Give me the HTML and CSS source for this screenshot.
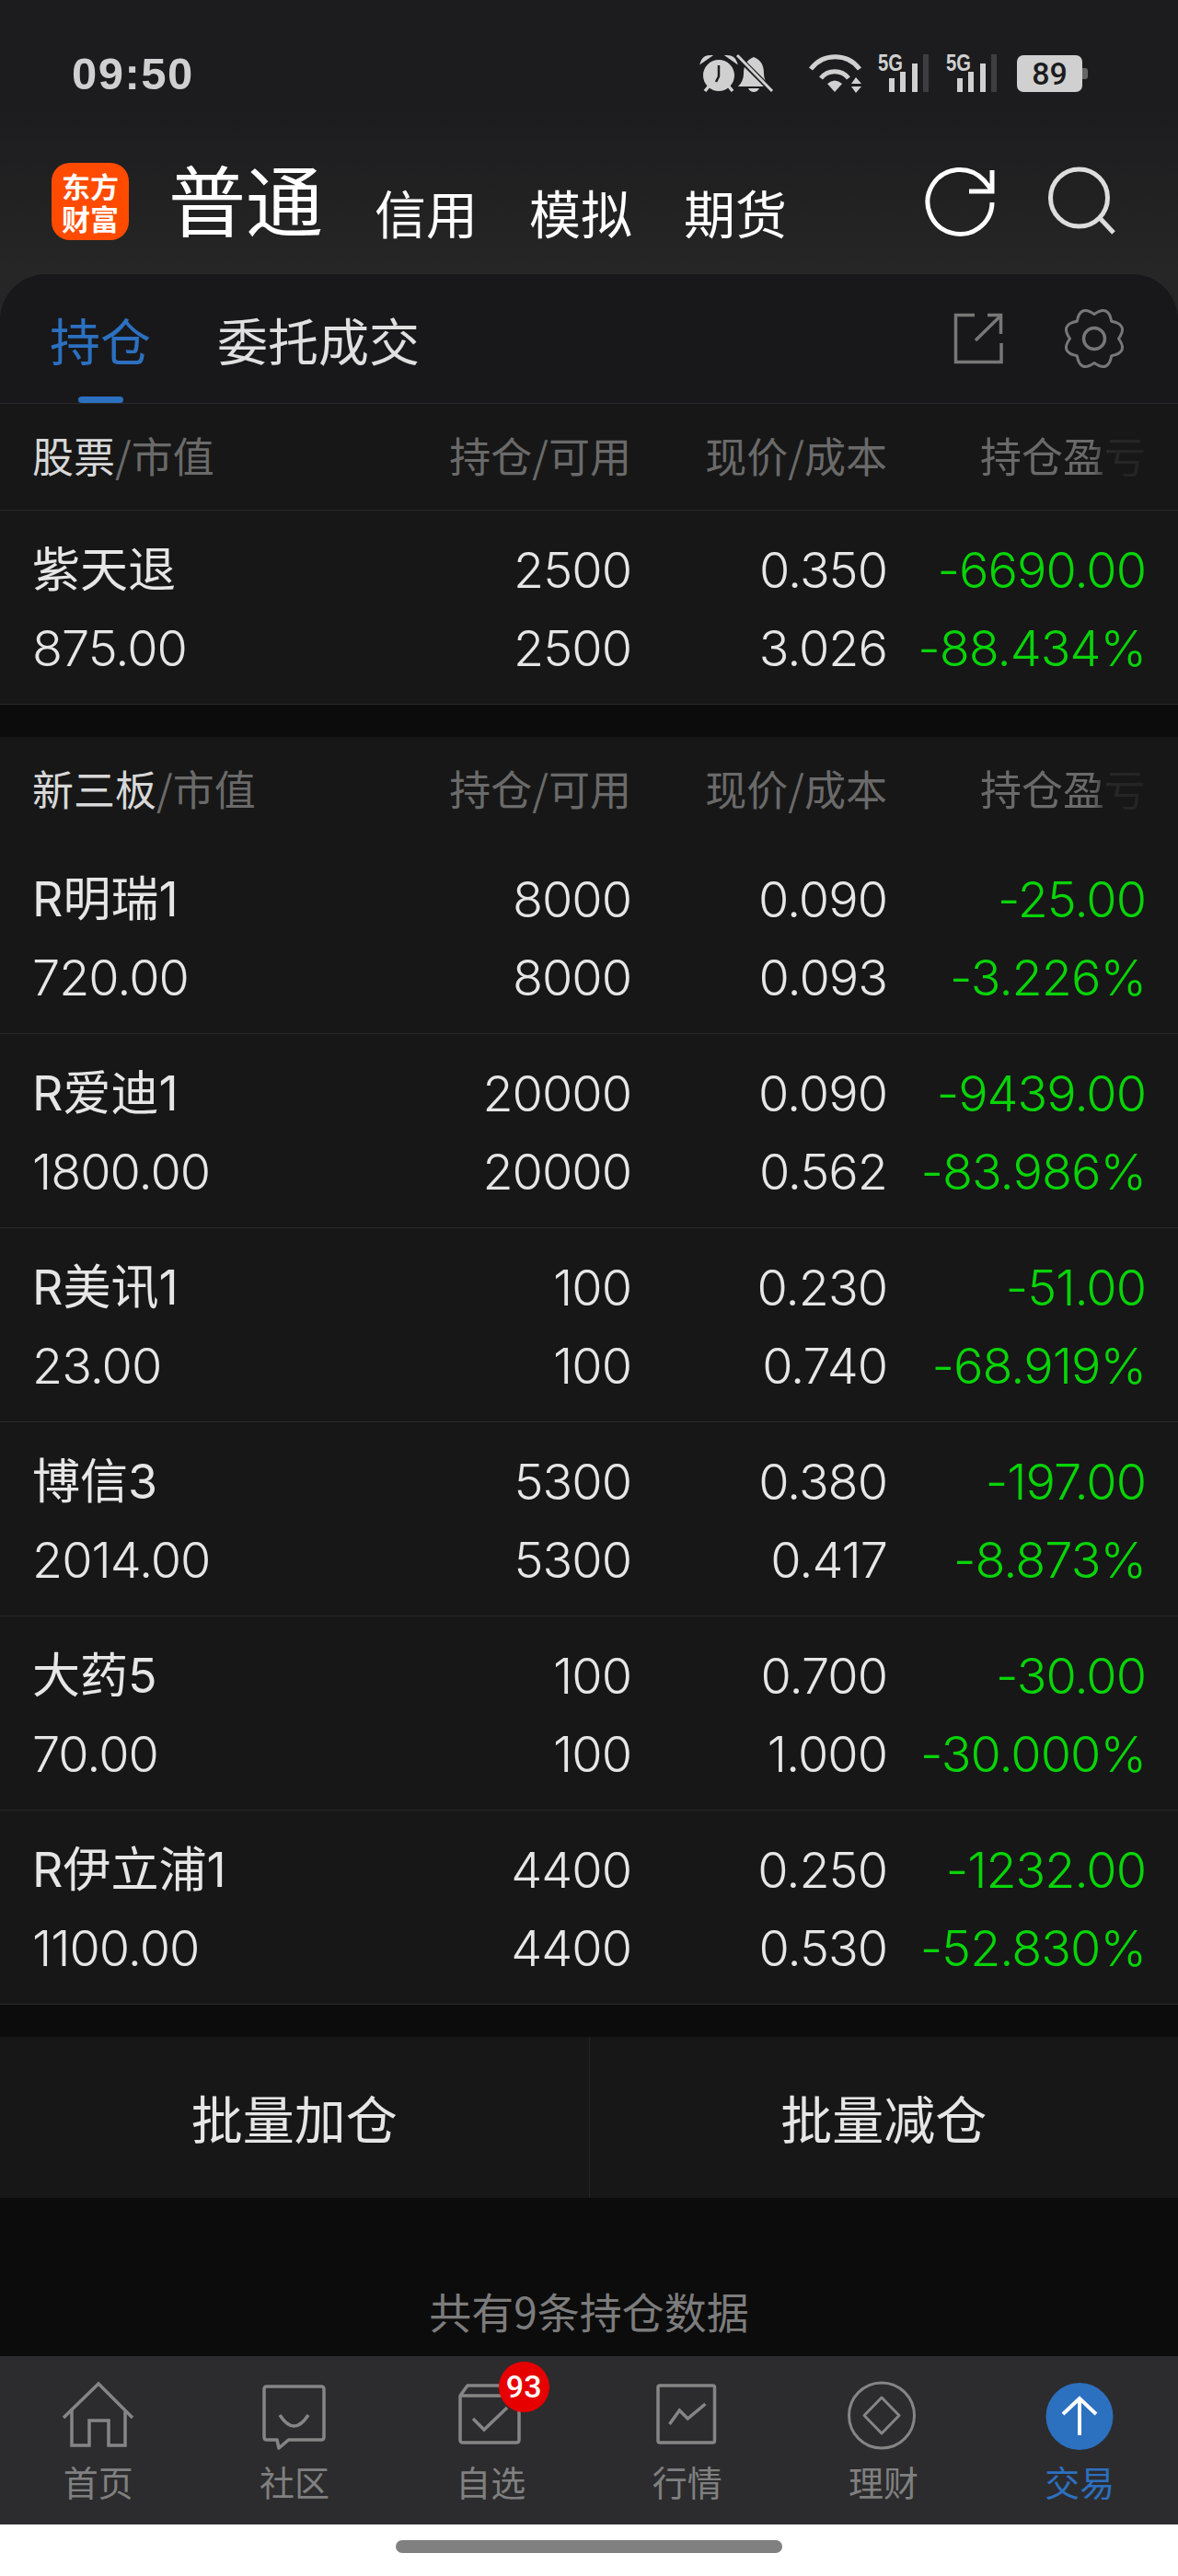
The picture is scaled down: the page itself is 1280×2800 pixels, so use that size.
FILE: index.html
```html
<!DOCTYPE html>
<html lang="zh-CN">
<head>
    <meta charset="utf-8" />
    <title>持仓</title>
    <link rel="stylesheet" href="styles.css">
</head>
<body>
<div class="top">
    <div class="status">
        <span class="time">09:50</span>
        <div class="status-icons">
            <svg class="ic-alarm" width="84" height="44" viewBox="0 0 84 44">
                <circle cx="23" cy="24" r="17" fill="#d0d0d0"/>
                <path d="M4 10 Q6 3 14 3 Z M32 3 Q40 3 42 10 Z" fill="#d0d0d0" stroke="#d0d0d0" stroke-width="2"/>
                <path d="M23 13V25L20 31" fill="none" stroke="#1c1c1e" stroke-width="2.500"/>
                <path d="M12 36 8 41M34 36 38 41" stroke="#d0d0d0" stroke-width="3.500"/>
                <path d="M61 4Q72 8 72 22Q72 30 78 36H44Q50 30 50 22Q50 8 61 4Z" fill="#d0d0d0"/>
                <path d="M55 38H67Q65 42 61 42Q57 42 55 38Z" fill="#d0d0d0"/>
                <path d="M41 1 81 41" stroke="#1c1c1e" stroke-width="6"/>
                <path d="M43 2 81 41" stroke="#d0d0d0" stroke-width="3"/>
            </svg>
            <svg class="ic-wifi" width="62" height="44" viewBox="0 0 62 44">
                <path d="M3 17A33 33 0 0 1 56 17M14 27A19 19 0 0 1 44 27" fill="none" stroke="#d0d0d0" stroke-width="5"/>
                <path d="M21 33Q29 26 37 33L29 42Z" fill="#d0d0d0"/>
                <path d="M47 33 52 26 58 33ZM47 36H58L52 43Z" fill="#d0d0d0"/>
            </svg>
            <svg class="ic-signal" width="60" height="60" viewBox="0 -16 60 60">
                <text x="1" y="19" class="five-g" textLength="27" lengthAdjust="spacingAndGlyphs">5G</text>
                <rect x="13" y="27" width="6" height="15" fill="#d0d0d0"/>
                <rect x="25" y="20" width="6" height="22" fill="#d0d0d0"/>
                <rect x="38" y="11" width="6" height="31" fill="#d0d0d0"/>
                <rect x="50" y="1" width="6" height="41" fill="#3e3e40"/>
            </svg>
            <svg class="ic-signal last" width="60" height="60" viewBox="0 -16 60 60">
                <text x="1" y="19" class="five-g" textLength="27" lengthAdjust="spacingAndGlyphs">5G</text>
                <rect x="13" y="27" width="6" height="15" fill="#d0d0d0"/>
                <rect x="25" y="20" width="6" height="22" fill="#d0d0d0"/>
                <rect x="38" y="11" width="6" height="31" fill="#d0d0d0"/>
                <rect x="50" y="1" width="6" height="41" fill="#3e3e40"/>
            </svg>
            <div class="battery"><span class="battery-num">89</span><i class="battery-nub"></i></div>
        </div>
    </div>

    <div class="nav">
        <div class="logo">东方<br>财富</div>
        <span class="nav-main">普通</span>
        <span class="nav-item">信用</span>
        <span class="nav-item">模拟</span>
        <span class="nav-item">期货</span>
        <svg class="ic-refresh" width="80" height="80" viewBox="0 0 80 80">
            <path d="M75 39A35 35 0 1 1 66 15L75 26M75 4V27H50" fill="none" stroke="#fff" stroke-width="5"/>
        </svg>
        <svg class="ic-search" width="76" height="76" viewBox="0 0 76 76">
            <circle cx="35.500" cy="35" r="31" fill="none" stroke="#ddd" stroke-width="5"/>
            <path d="M58 57 73 73" stroke="#ddd" stroke-width="5"/>
        </svg>
    </div>

    <div class="tabs">
        <span class="tab active">持仓</span>
        <span class="tab">委托成交</span>
        <svg class="ic-share" width="56" height="58" viewBox="0 0 56 58">
            <path d="M24 3.500H3.500V54.500H53V34M25 31 52 4.500M38 3.500H52.500V24" fill="none" stroke="#777" stroke-width="3.500"/>
        </svg>
        <svg class="ic-gear" width="68" height="66" viewBox="0 0 68 66">
            <path d="M60.500 33Q71.400 48.500 52.700 51.700Q49.500 70.400 34 59.500Q18.500 70.400 15.300 51.700Q-3.400 48.500 7.500 33Q-3.400 17.500 15.300 14.300Q18.500 -4.400 34 6.500Q49.500 -4.400 52.700 14.300Q71.400 17.500 60.500 33Z" fill="none" stroke="#777" stroke-width="3" stroke-linejoin="round"/>
            <circle cx="34" cy="33" r="11.500" fill="none" stroke="#777" stroke-width="3.500"/>
        </svg>
    </div>
</div>

<section class="block first-block">
    <div class="head">
        <div class="head-name"><b>股票</b>/市值</div>
        <div class="cell">持仓/可用</div>
        <div class="cell">现价/成本</div>
        <div class="cell"><span class="fade">持仓盈亏</span></div>
    </div>
    <div class="row">
        <div class="name">紫天退</div><div class="cell">2500</div><div class="cell">0.350</div><div class="cell green">-6690.00</div>
        <div>875.00</div><div class="cell">2500</div><div class="cell">3.026</div><div class="cell green">-88.434%</div>
    </div>
</section>

<section class="block">
    <div class="head second">
        <div class="head-name"><b>新三板</b>/市值</div>
        <div class="cell">持仓/可用</div>
        <div class="cell">现价/成本</div>
        <div class="cell"><span class="fade">持仓盈亏</span></div>
    </div>
    <div class="row">
        <div class="name">R明瑞1</div><div class="cell">8000</div><div class="cell">0.090</div><div class="cell green">-25.00</div>
        <div>720.00</div><div class="cell">8000</div><div class="cell">0.093</div><div class="cell green">-3.226%</div>
    </div>
    <div class="row">
        <div class="name">R爱迪1</div><div class="cell">20000</div><div class="cell">0.090</div><div class="cell green">-9439.00</div>
        <div>1800.00</div><div class="cell">20000</div><div class="cell">0.562</div><div class="cell green">-83.986%</div>
    </div>
    <div class="row">
        <div class="name">R美讯1</div><div class="cell">100</div><div class="cell">0.230</div><div class="cell green">-51.00</div>
        <div>23.00</div><div class="cell">100</div><div class="cell">0.740</div><div class="cell green">-68.919%</div>
    </div>
    <div class="row">
        <div class="name">博信3</div><div class="cell">5300</div><div class="cell">0.380</div><div class="cell green">-197.00</div>
        <div>2014.00</div><div class="cell">5300</div><div class="cell">0.417</div><div class="cell green">-8.873%</div>
    </div>
    <div class="row">
        <div class="name">大药5</div><div class="cell">100</div><div class="cell">0.700</div><div class="cell green">-30.00</div>
        <div>70.00</div><div class="cell">100</div><div class="cell">1.000</div><div class="cell green">-30.000%</div>
    </div>
    <div class="row">
        <div class="name">R伊立浦1</div><div class="cell">4400</div><div class="cell">0.250</div><div class="cell green">-1232.00</div>
        <div>1100.00</div><div class="cell">4400</div><div class="cell">0.530</div><div class="cell green">-52.830%</div>
    </div>
</section>

<div class="batch">
    <div class="batch-btn">批量加仓</div>
    <div class="batch-btn">批量减仓</div>
</div>

<div class="summary">共有9条持仓数据</div>

<footer class="tabbar">
    <div class="tabbar-item">
        <svg class="bar-icon" width="84" height="84" viewBox="0 0 84 84">
            <path d="M4 42 42 5 79 42M13 33V72H32V45H53V72H71V33" fill="none" stroke="#858585" stroke-width="3.500"/>
        </svg>
        首页
    </div>
    <div class="tabbar-item">
        <svg class="bar-icon" width="84" height="84" viewBox="0 0 84 84">
            <path d="M12 8H71Q74 8 74 11V63Q74 66 71 66H35.500L25 75 23 66H12Q9 66 9 63V11Q9 8 12 8Z" fill="none" stroke="#858585" stroke-width="3.500" stroke-linejoin="round"/>
            <path d="M26 39Q41.500 63 57 39" fill="none" stroke="#858585" stroke-width="3.500"/>
        </svg>
        社区
    </div>
    <div class="tabbar-item">
        <svg class="bar-icon" width="84" height="84" viewBox="0 0 84 84">
            <path d="M9 18V66Q9 69 12 69H70Q73 69 73 66V18ZM9 18 17 7H65L73 18" fill="none" stroke="#858585" stroke-width="3.500" stroke-linejoin="round"/>
            <path d="M23 43 35 55 60 31" fill="none" stroke="#858585" stroke-width="3.500"/>
        </svg>
        自选
        <span class="badge">93</span>
    </div>
    <div class="tabbar-item">
        <svg class="bar-icon" width="84" height="84" viewBox="0 0 84 84">
            <rect x="10" y="7" width="61.500" height="62" rx="2" fill="none" stroke="#858585" stroke-width="3.500"/>
            <path d="M22.500 49 33.300 34 42.300 43 61.400 27" fill="none" stroke="#858585" stroke-width="3.500"/>
        </svg>
        行情
    </div>
    <div class="tabbar-item">
        <svg class="bar-icon" width="84" height="84" viewBox="0 0 84 84">
            <circle cx="40" cy="39.500" r="35.500" fill="none" stroke="#858585" stroke-width="3"/>
            <path d="M40 20 59 39.500 40 59 21 39.500Z" fill="none" stroke="#858585" stroke-width="3" stroke-linejoin="round"/>
        </svg>
        理财
    </div>
    <div class="tabbar-item active">
        <svg class="bar-icon" width="84" height="84" viewBox="0 0 84 84">
            <circle cx="42" cy="40.500" r="36.500" fill="#2c70c0"/>
            <path d="M24 38 42 21 60 38M42 21V61" fill="none" stroke="#fff" stroke-width="4"/>
        </svg>
        交易
    </div>
</footer>

<div class="home-bar"><i class="home-pill"></i></div>
</body>
</html>
```

FILE: styles.css
```css
body {
    margin: 0;
    width: 1280px;
    height: 2800px;
    overflow: hidden;
    background-color: #0c0c0c;
    color: #e6e6e6;
    font-family: Inter, "Noto Sans CJK SC", sans-serif;
}

/* top area */
.top {
    background: linear-gradient(#1c1c1e 0, #1c1c1e 120px, #262626 298px);
}

.status {
    height: 160px;
    display: flex;
    align-items: center;
    padding: 0 104px 0 78px;
}

.time {
    font-family: "Liberation Sans", sans-serif;
    font-weight: bold;
    font-size: 49px;
    letter-spacing: 1.5px;
    color: #d0d0d0;
}

.status-icons {
    display: flex;
    align-items: center;
    margin-left: auto;
}

.ic-alarm {
    margin-right: 36px;
}

.ic-wifi {
    margin-right: 13px;
}

.ic-signal {
    margin-right: 14px;
    margin-top: -16px;
}

.ic-signal.last {
    margin-right: 18px;
}

.five-g {
    font-family: "Liberation Sans", sans-serif;
    font-weight: bold;
    font-size: 26px;
    fill: #d0d0d0;
}

.battery {
    position: relative;
    width: 71px;
    height: 40px;
    background-color: #d0d0d0;
    border-radius: 7px;
    text-align: center;
}

.battery-num {
    display: block;
    font-family: Roboto, sans-serif;
    font-size: 34px;
    line-height: 40px;
    font-weight: 500;
    color: #1c1c1e;
}

.battery-nub {
    position: absolute;
    left: 71px;
    top: 14px;
    width: 6px;
    height: 12px;
    border-radius: 0 3px 3px 0;
    background-color: #666;
}

.nav {
    height: 138px;
    display: flex;
    align-items: flex-start;
    padding-left: 56px;
    font-family: "Noto Sans CJK SC", sans-serif;
    color: #fff;
}

.logo {
    width: 84px;
    height: 84px;
    margin-top: 17px;
    border-radius: 20px;
    background-color: #ff4b00;
    font-size: 31px;
    font-weight: bold;
    line-height: 35px;
    text-align: center;
    padding-top: 7px;
    box-sizing: border-box;
}

.nav-main {
    margin-left: 43px;
    font-size: 84px;
    line-height: 110px;
}

.nav-item {
    font-size: 56px;
    line-height: 78px;
    margin-top: 31px;
    margin-left: 56px;
}

.ic-refresh {
    margin-left: 148px;
    margin-top: 21px;
}

.ic-search {
    margin-left: 54px;
    margin-top: 20px;
}

.tabs {
    height: 140px;
    display: flex;
    align-items: center;
    padding-left: 54px;
    box-sizing: border-box;
    background-color: #18181a;
    border-radius: 50px 50px 0 0;
}

.tab {
    position: relative;
    margin-right: 72px;
    font-family: "Noto Sans CJK SC", sans-serif;
    font-size: 55px;
    line-height: 140px;
    color: #e0e0e0;
}

.tab.active {
    color: #2c70c0;
}

.tab.active::after {
    content: "";
    position: absolute;
    left: 31px;
    bottom: 0;
    width: 49px;
    height: 7px;
    border-radius: 4px;
    background-color: #2c70c0;
}

.ic-share {
    margin-left: auto;
}

.ic-gear {
    margin-left: 64px;
    margin-right: 57px;
}

/* tables */
.block {
    background-color: #171717;
    margin-bottom: 35px;
}

.first-block {
    border-top: 1px solid #2a2a2a;
}

.head, .row {
    display: grid;
    grid-template-columns: 1fr 224px 278px 281px;
    padding: 0 35px 0 35px;
}

.head {
    height: 110px;
    padding-bottom: 5px;
    align-items: center;
    font-size: 45px;
    font-family: "Noto Sans CJK SC", sans-serif;
    color: #6a6a6a;
    border-bottom: 1px solid #2a2a2a;
}

.head.second {
    height: 110px;
    padding-bottom: 2px;
    border-bottom: none;
}

.head-name b {
    font-weight: normal;
    color: #d8d8d8;
}

.fade {
    -webkit-mask-image: linear-gradient(to right, #000 68%, rgba(0, 0, 0, 0.2) 78%, rgba(0, 0, 0, 0.15) 100%);
    mask-image: linear-gradient(to right, #000 68%, rgba(0, 0, 0, 0.2) 78%, rgba(0, 0, 0, 0.15) 100%);
}

.row {
    padding-top: 22px;
    padding-bottom: 18px;
    font-size: 54px;
    font-weight: 300;
    letter-spacing: -1px;
    line-height: 85px;
    border-bottom: 1px solid #2a2a2a;
}

.name {
    font-size: 52px;
    font-weight: 400;
    letter-spacing: 0;
}

.cell {
    text-align: right;
}

.green {
    color: #08d408;
}

.batch {
    display: flex;
    height: 175px;
    background-color: #171717;
}

.batch-btn {
    flex: 1;
    text-align: center;
    font-family: "Noto Sans CJK SC", sans-serif;
    font-size: 56px;
    line-height: 173px;
}

.batch-btn:first-child {
    border-right: 1px solid #232323;
}

.summary {
    height: 172px;
    box-sizing: border-box;
    padding-top: 91px;
    text-align: center;
    font-family: "Noto Sans CJK SC", sans-serif;
    font-size: 46px;
    line-height: 62px;
    color: #7c7c7c;
}

/* bottom tabs */
.tabbar {
    height: 183px;
    display: flex;
    background-color: #2c2c2e;
}

.tabbar-item {
    position: relative;
    flex: 1;
    text-align: center;
    font-family: "Noto Sans CJK SC", sans-serif;
    font-size: 38px;
    line-height: 50px;
    color: #808080;
}

.tabbar-item.active {
    color: #2c70c0;
}

.bar-icon {
    display: block;
    margin: 25px auto 2px;
}

.badge {
    position: absolute;
    left: 115px;
    top: 6px;
    width: 55px;
    height: 55px;
    border-radius: 50%;
    background-color: #e60000;
    color: #fff;
    font-family: Roboto, sans-serif;
    font-size: 34px;
    font-weight: 500;
    line-height: 55px;
}

.home-bar {
    height: 56px;
    background-color: #fff;
    padding-top: 17px;
    box-sizing: border-box;
}

.home-pill {
    display: block;
    width: 420px;
    height: 14px;
    margin: 0 auto;
    border-radius: 7px;
    background-color: #808080;
}
```
